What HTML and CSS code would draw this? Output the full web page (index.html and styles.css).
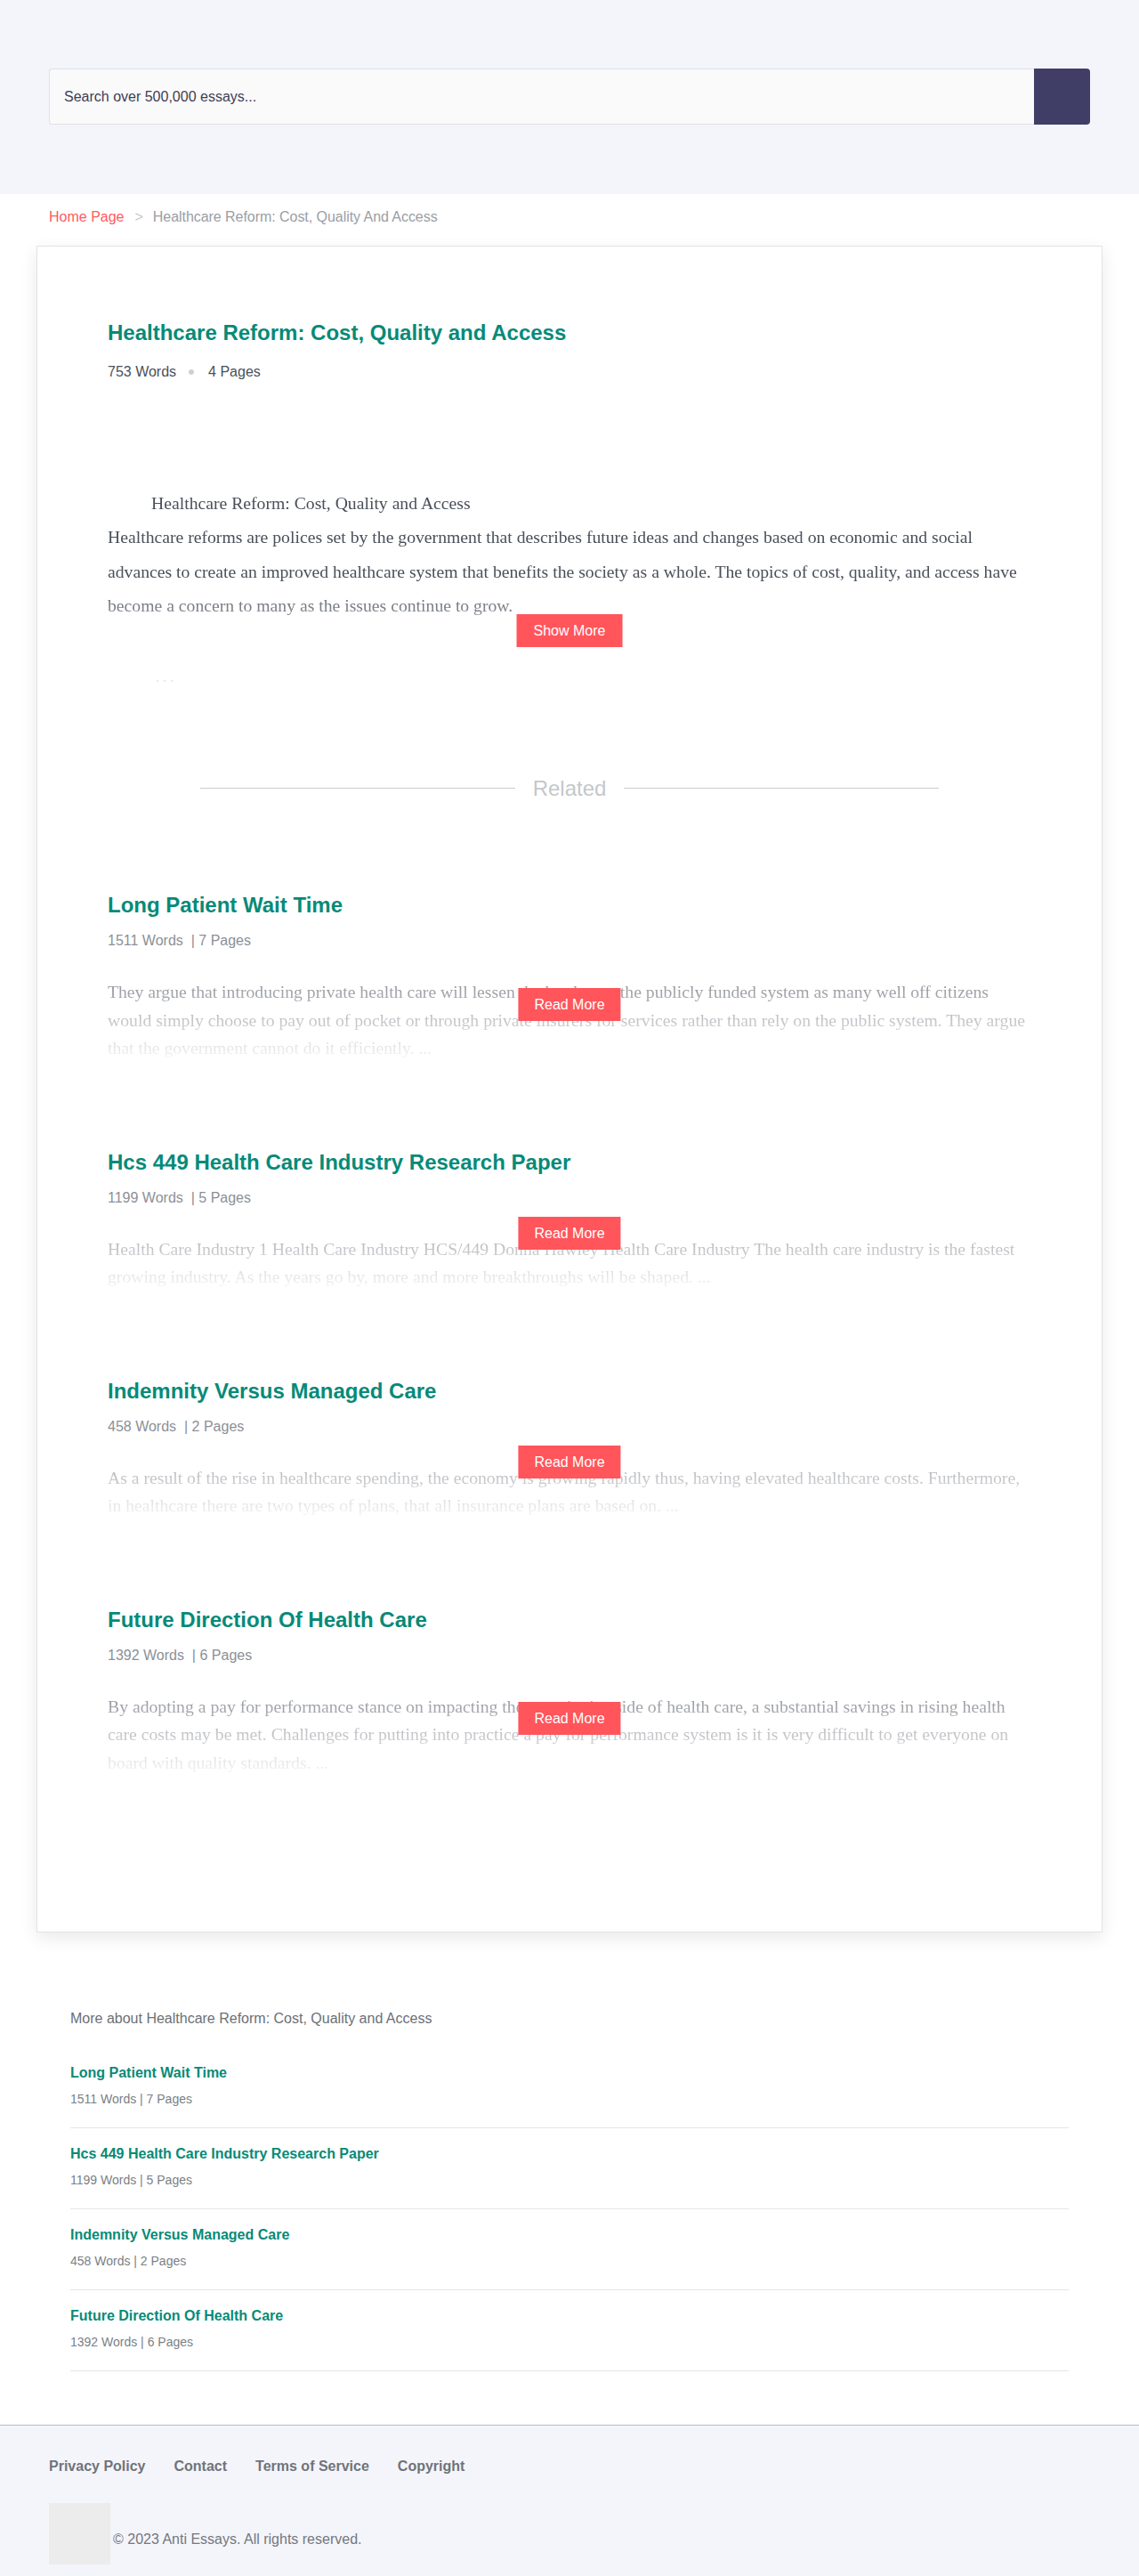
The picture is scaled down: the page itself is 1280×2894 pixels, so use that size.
FILE: index.html
```html
<!DOCTYPE html>
<html lang="en">
<head>
<meta charset="utf-8">
<title>Healthcare Reform: Cost, Quality and Access</title>
<link rel="stylesheet" href="styles.css">
</head>
<body>
<header class="site-header">
  <div class="container">
    <form class="search">
      <div class="search-input">Search over 500,000 essays...</div>
      <button class="search-btn" type="button" aria-label="Search"></button>
    </form>
  </div>
</header>

<nav class="breadcrumb container">
  <a class="crumb-home" href="#">Home Page</a><span class="crumb-sep">&gt;</span><span class="crumb-current">Healthcare Reform: Cost, Quality And Access</span>
</nav>

<main class="card">
  <h1 class="doc-title">Healthcare Reform: Cost, Quality and Access</h1>
  <div class="doc-meta"><span>753 Words</span><span class="dot"></span><span>4 Pages</span></div>

  <div class="essay">
    <div class="essay-text">
      <p class="essay-heading">Healthcare Reform: Cost, Quality and Access</p>
      <p>Healthcare reforms are polices set by the government that describes future ideas and changes based on economic and social advances to create an improved healthcare system that benefits the society as a whole. The topics of cost, quality, and access have become a concern to many as the issues continue to grow.</p>
    </div>
    <a class="btn btn-show" href="#">Show More</a>
    <p class="essay-ellipsis">. . .</p>
  </div>

  <div class="related-head"><span class="related-line"></span><span class="related-label">Related</span><span class="related-line"></span></div>

  <article class="item">
    <h2 class="item-title"><a href="#">Long Patient Wait Time</a></h2>
    <div class="item-meta">1511 Words&nbsp; | 7 Pages</div>
    <div class="excerpt-wrap">
      <p class="excerpt">They argue that introducing private health care will lessen the burden on the publicly funded system as many well off citizens would simply choose to pay out of pocket or through private insurers for services rather than rely on the public system. They argue that the government cannot do it efficiently. ...</p>
      <a class="btn btn-read" href="#">Read More</a>
    </div>
  </article>

  <article class="item">
    <h2 class="item-title"><a href="#">Hcs 449 Health Care Industry Research Paper</a></h2>
    <div class="item-meta">1199 Words&nbsp; | 5 Pages</div>
    <div class="excerpt-wrap">
      <p class="excerpt">Health Care Industry 1 Health Care Industry HCS/449 Donna Hawley Health Care Industry The health care industry is the fastest growing industry. As the years go by, more and more breakthroughs will be shaped. ...</p>
      <a class="btn btn-read" href="#">Read More</a>
    </div>
  </article>

  <article class="item">
    <h2 class="item-title"><a href="#">Indemnity Versus Managed Care</a></h2>
    <div class="item-meta">458 Words&nbsp; | 2 Pages</div>
    <div class="excerpt-wrap">
      <p class="excerpt">As a result of the rise in healthcare spending, the economy is growing rapidly thus, having elevated healthcare costs. Furthermore, in healthcare there are two types of plans, that all insurance plans are based on. ...</p>
      <a class="btn btn-read" href="#">Read More</a>
    </div>
  </article>

  <article class="item">
    <h2 class="item-title"><a href="#">Future Direction Of Health Care</a></h2>
    <div class="item-meta">1392 Words&nbsp; | 6 Pages</div>
    <div class="excerpt-wrap">
      <p class="excerpt">By adopting a pay for performance stance on impacting the quantitative side of health care, a substantial savings in rising health care costs may be met. Challenges for putting into practice a pay for performance system is it is very difficult to get everyone on board with quality standards. ...</p>
      <a class="btn btn-read" href="#">Read More</a>
    </div>
  </article>
</main>

<section class="more">
  <p class="more-heading">More about Healthcare Reform: Cost, Quality and Access</p>
  <div class="more-item">
    <a class="more-title" href="#">Long Patient Wait Time</a>
    <div class="more-meta">1511 Words | 7 Pages</div>
  </div>
  <div class="more-item">
    <a class="more-title" href="#">Hcs 449 Health Care Industry Research Paper</a>
    <div class="more-meta">1199 Words | 5 Pages</div>
  </div>
  <div class="more-item">
    <a class="more-title" href="#">Indemnity Versus Managed Care</a>
    <div class="more-meta">458 Words | 2 Pages</div>
  </div>
  <div class="more-item">
    <a class="more-title" href="#">Future Direction Of Health Care</a>
    <div class="more-meta">1392 Words | 6 Pages</div>
  </div>
</section>

<footer class="site-footer">
  <div class="container">
    <nav class="footer-links">
      <a href="#">Privacy Policy</a>
      <a href="#">Contact</a>
      <a href="#">Terms of Service</a>
      <a href="#">Copyright</a>
    </nav>
    <div class="footer-bottom">
      <div class="footer-logo"></div>
      <span class="footer-copy">© 2023 Anti Essays. All rights reserved.</span>
    </div>
  </div>
</footer>
</body>
</html>
```

FILE: styles.css
```css
* { box-sizing: border-box; }

body {
  margin: 0;
  font-family: "Liberation Sans", Arial, sans-serif;
  color: #4a505a;
  background: #fff;
}

a { text-decoration: none; }
p { margin: 0; }

.container {
  width: 1170px;
  margin: 0 auto;
}

/* Header */
.site-header {
  background: #f4f5fa;
  padding: 77px 0 78px;
}

.search {
  display: flex;
  height: 63px;
  margin: 0;
}

.search-input {
  flex: 1;
  display: flex;
  align-items: center;
  padding: 0 16px;
  background: #fafafa;
  border: 1px solid #e0e1e7;
  border-right: 0;
  border-radius: 3px 0 0 3px;
  font-size: 16px;
  color: #3f3d56;
}

.search-btn {
  width: 63px;
  border: 0;
  padding: 0;
  background: #403e66;
  border-radius: 0 4px 4px 0;
}

/* Breadcrumb */
.breadcrumb {
  padding: 16px 0 22px;
  font-size: 16px;
  line-height: 20px;
}

.crumb-home { color: #ff5a5f; }
.crumb-sep { color: #c4c7cb; margin: 0 11px 0 12px; }
.crumb-current { color: #9a9ea4; letter-spacing: -0.05px; }

/* Card */
.card {
  display: block;
  width: 1198px;
  margin: 0 auto;
  padding: 82px 79px 77px;
  background: #fff;
  border: 1px solid #e1e4e4;
  box-shadow: 0 6px 18px rgba(0, 0, 0, 0.09);
}

.doc-title {
  margin: 0;
  font-size: 24px;
  line-height: 29px;
  font-weight: 700;
  color: #078a78;
}

.doc-meta {
  margin-top: 20px;
  display: flex;
  align-items: center;
  font-size: 16px;
  line-height: 20px;
  color: #4a505a;
}

.dot {
  width: 6px;
  height: 6px;
  border-radius: 50%;
  background: #cdd1d5;
  margin: 0 16px 0 14px;
}

.essay {
  position: relative;
  margin-top: 118px;
  font-family: "Liberation Serif", "Times New Roman", serif;
  font-size: 19.7px;
  line-height: 38.4px;
  color: #4a505a;
}

.essay-text {
  -webkit-mask-image: linear-gradient(to top, rgba(0,0,0,0.55) 0, #000 45px);
  mask-image: linear-gradient(to top, rgba(0,0,0,0.55) 0, #000 45px);
}

.essay-heading { padding-left: 49px; }

.essay-ellipsis {
  margin-top: 42px;
  padding-left: 54px;
  font-size: 16px;
  color: #e4e5e7;
}

.btn {
  position: absolute;
  left: 50%;
  transform: translateX(-50%);
  background: #ff555b;
  color: #fff;
  font-family: "Liberation Sans", Arial, sans-serif;
  font-size: 16px;
  line-height: 19px;
  padding: 9px 18px;
  white-space: nowrap;
}

.btn-show { top: 144px; padding: 9px 19px; }

/* Related */
.related-head {
  width: 80%;
  margin: 91px auto 102px;
  display: flex;
  align-items: center;
}

.related-line {
  flex: 1;
  height: 1px;
  background: #c9cdd1;
}

.related-label {
  margin: 0 20px;
  font-size: 24px;
  line-height: 29px;
  color: #c3c7cb;
}

.item { margin-bottom: 97px; }

.item-title {
  margin: 0;
  font-size: 24px;
  line-height: 29px;
  font-weight: 700;
}

.item-title a { color: #078a78; }

.item-meta {
  margin-top: 16px;
  font-size: 16px;
  line-height: 20px;
  color: #8c9096;
}

.excerpt-wrap {
  position: relative;
  margin-top: 32px;
}

.excerpt {
  font-family: "Liberation Serif", "Times New Roman", serif;
  font-size: 19.7px;
  line-height: 31.5px;
  color: #4a505a;
  -webkit-mask-image: linear-gradient(to top, rgba(0,0,0,0.03) 0, rgba(0,0,0,0.63) 95px);
  mask-image: linear-gradient(to top, rgba(0,0,0,0.03) 0, rgba(0,0,0,0.63) 95px);
}

.btn-read { bottom: 47px; }

/* More about */
.more {
  width: 1122px;
  margin: 88px auto 0;
}

.more-heading {
  font-size: 16px;
  line-height: 18px;
  color: #6b7076;
  margin-bottom: 23px;
}

.more-item {
  padding: 19px 0 23px;
  border-bottom: 1px solid #e3e5e7;
}

.more-title {
  display: block;
  font-size: 16px;
  line-height: 20px;
  font-weight: 700;
  color: #078a78;
}

.more-meta {
  margin-top: 11px;
  font-size: 14px;
  line-height: 17px;
  color: #7a7f86;
}

/* Footer */
.site-footer {
  margin-top: 60px;
  background: #f4f5fa;
  border-top: 1px solid #b9bbbf;
  padding: 36px 0 13px;
}

.footer-links {
  display: flex;
  gap: 32px;
  font-size: 16px;
  line-height: 20px;
  font-weight: 700;
}

.footer-links a { color: #6f747a; }

.footer-bottom {
  margin-top: 31px;
  display: flex;
  align-items: flex-end;
}

.footer-logo {
  width: 69px;
  height: 69px;
  background: #ececec;
}

.footer-copy {
  margin: 0 0 18px 3px;
  font-size: 16px;
  line-height: 20px;
  color: #737880;
}
```
